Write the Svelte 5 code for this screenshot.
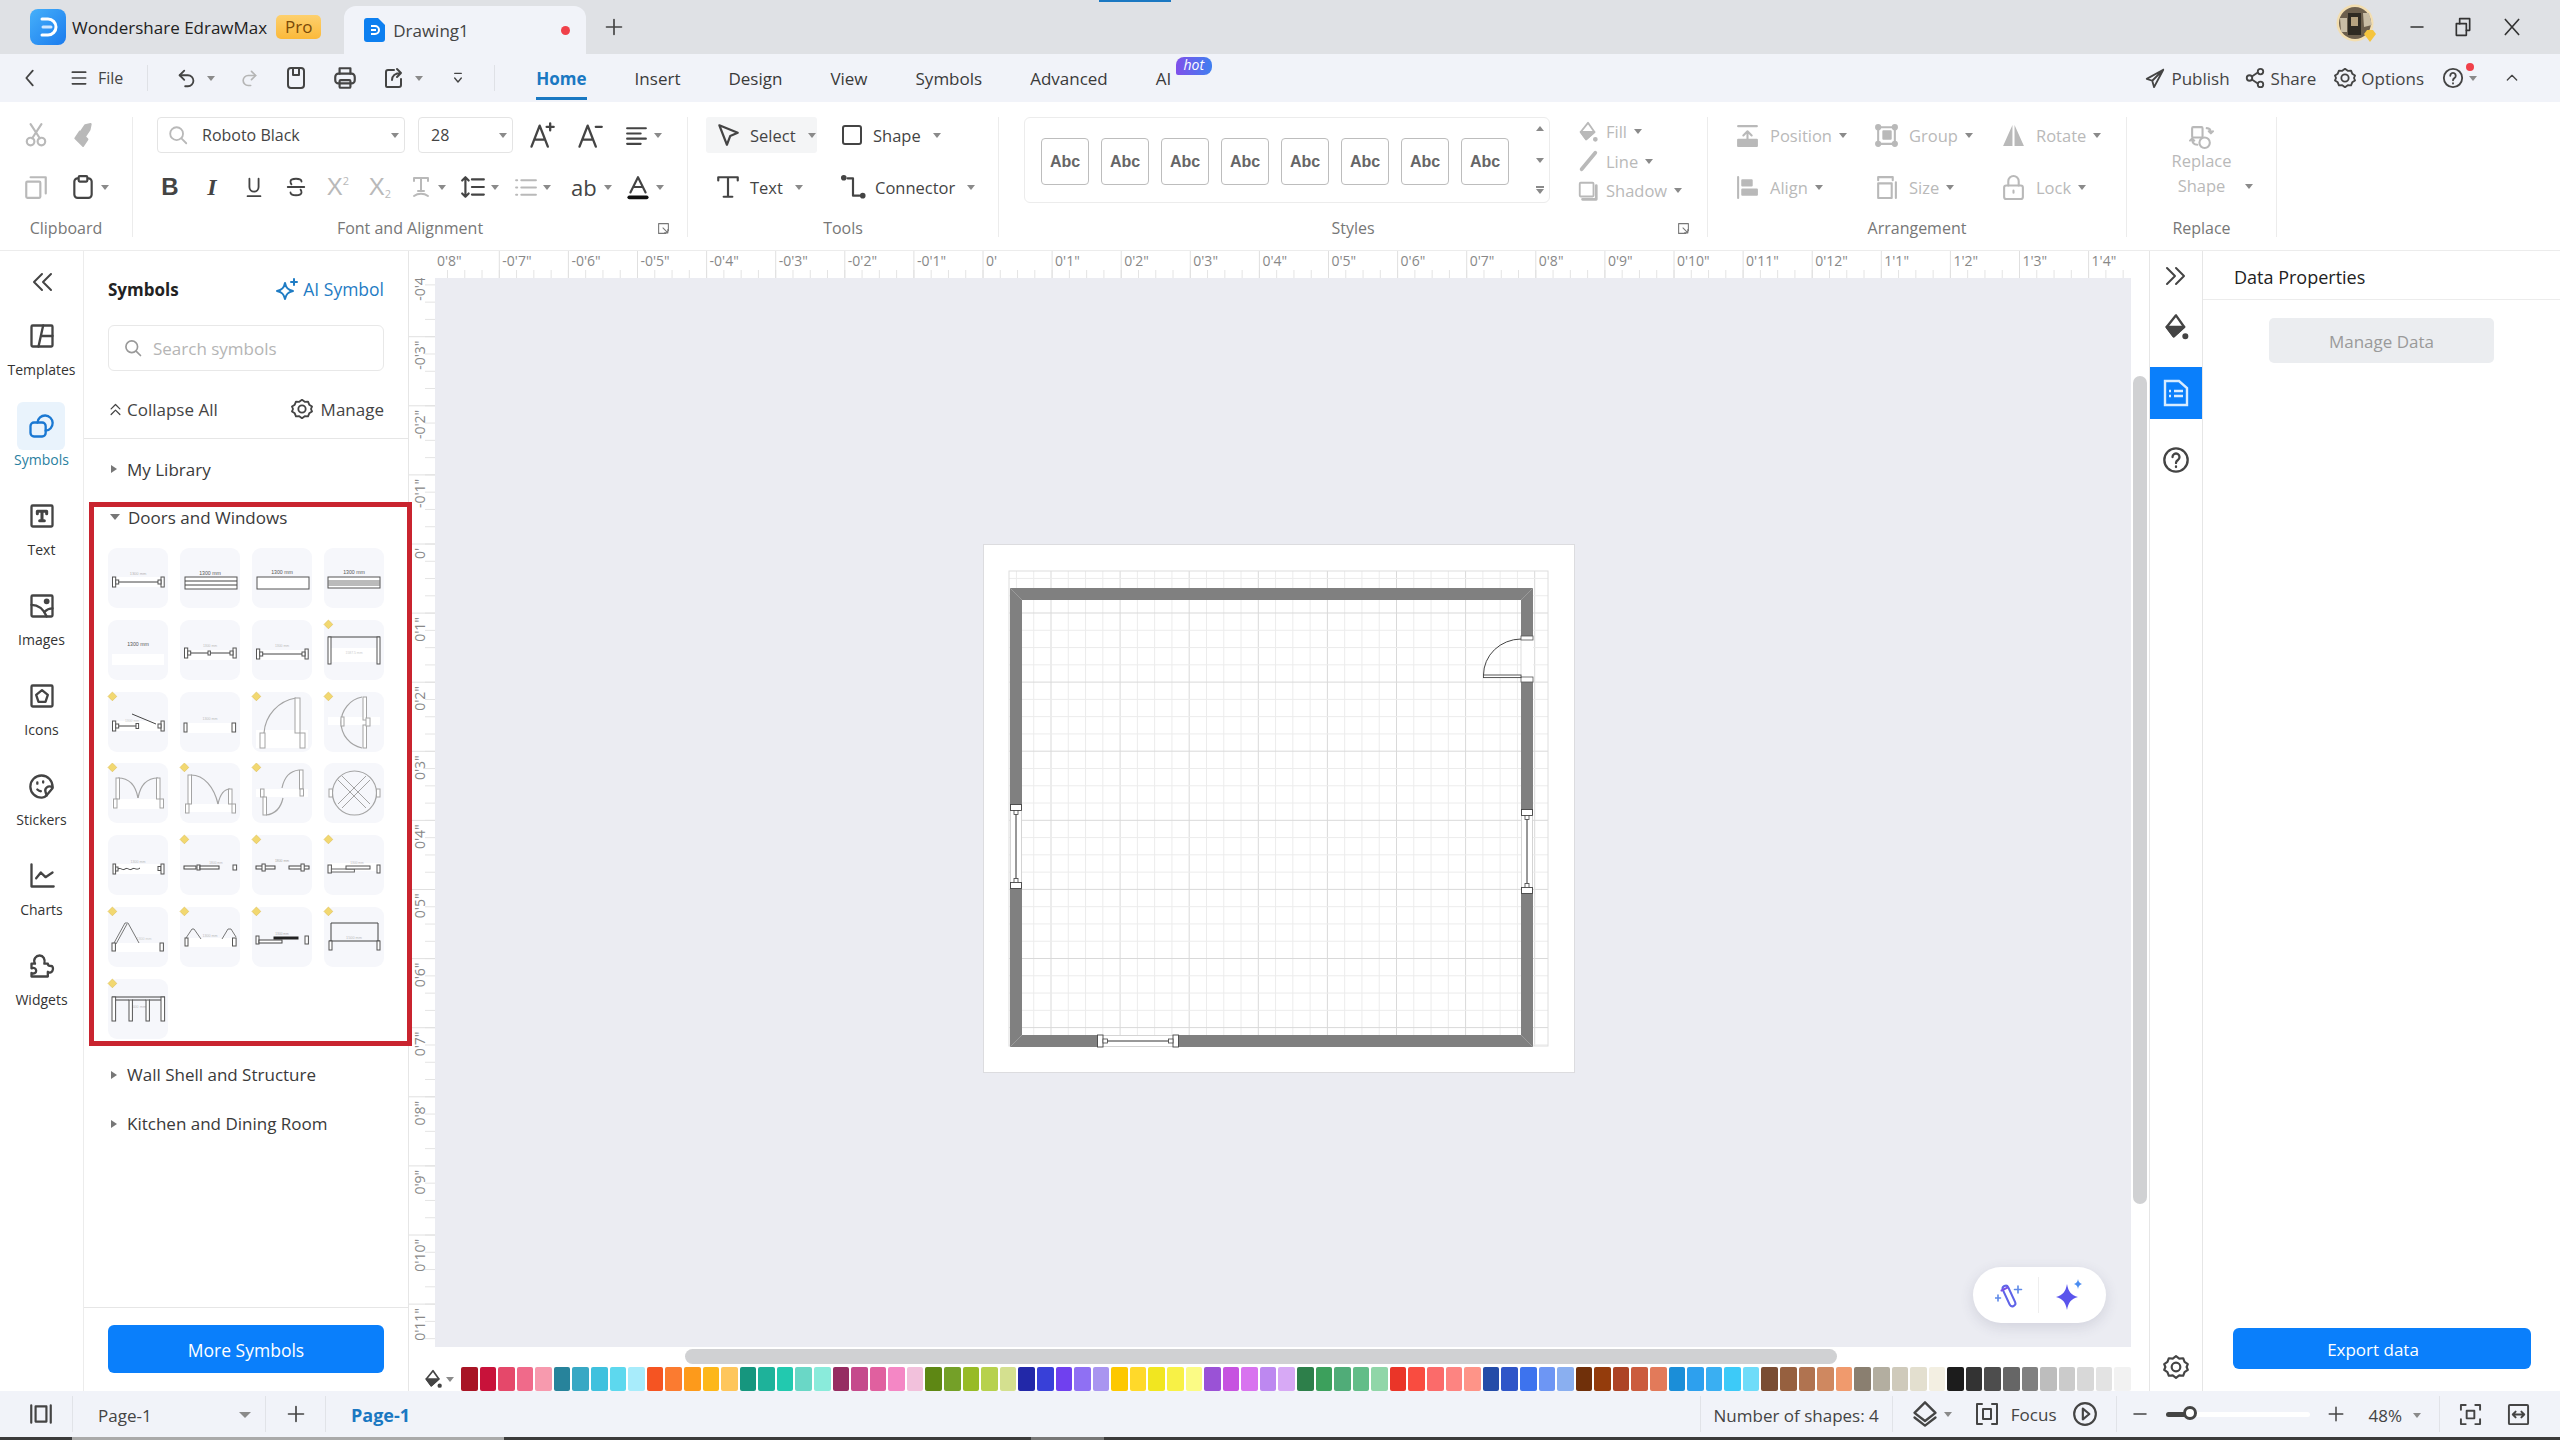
<script>
    const icons = {
        back: '<path d="M15 4 8 12l7 8"/>',
        menu: '<path d="M4 5h16M4 12h16M4 19h16"/>',
        undo: '<path d="M9 4 4 9l5 5"/><path d="M4 9h9a6 6 0 0 1 0 12h-3"/>',
        redo: '<path d="m15 4 5 5-5 5"/><path d="M20 9h-9a6 6 0 0 0 0 12h3"/>',
        save: '<rect x="4" y="2" width="16" height="20" rx="3"/><path d="M9 2v7h6V2"/>',
        print: '<path d="M7 8V3h10v5"/><rect x="3" y="8" width="18" height="9" rx="3"/><rect x="7" y="14" width="10" height="7" rx="1"/>',
        exportf: '<path d="M12 4H6a2 2 0 0 0-2 2v14a1 1 0 0 0 1 1h12a2 2 0 0 0 2-2v-6"/><path d="M10 14c0-4 3-7 9-7M15 3l4 4-4 4"/>',
        custom: '<path d="M7 5h10M7 12l5 6 5-6"/>',
        publish: '<path d="M21 3 3 13l6 2 2 7 10-19ZM9 15 21 3"/>',
        share: '<circle cx="18" cy="5" r="3"/><circle cx="6" cy="12" r="3"/><circle cx="18" cy="19" r="3"/><path d="m9 10 6-4M9 14l6 4"/>',
        gear: '<path d="m12 2 3 2.2 3.6-.3 1.3 3.4 3 2.1L21.8 12l1.1 2.6-3 2.1-1.3 3.4-3.6-.3L12 22l-3-2.2-3.6.3-1.3-3.4-3-2.1L2.2 12 1.1 9.4l3-2.1 1.3-3.4 3.6.3L12 2Z"/><circle cx="12" cy="12" r="4"/>',
        help: '<circle cx="12" cy="12" r="10"/><path d="M9 9.5a3 3 0 1 1 4.5 2.6c-1 .6-1.5 1.2-1.5 2.4"/><path d="M12 17.5v.5"/>',
        up: '<path d="m5 15 7-7 7 7"/>',
        cut: '<circle cx="7" cy="18" r="3.5"/><circle cx="17" cy="18" r="3.5"/><path d="M8.5 15 17 2M15.5 15 7 2"/>',
        painter: '<path d="m9 9 7 7-4 6-7-7z" fill="currentColor"/><path d="M14 3l5-1-1 5-4 6-4-4z" fill="currentColor"/>',
        copy: '<rect x="3" y="7" width="13" height="15" rx="1"/><path d="M7 3h14v15"/>',
        paste: '<rect x="4" y="4" width="16" height="18" rx="3"/><rect x="8" y="2" width="8" height="5" rx="1" fill="#fff"/>',
        search: '<circle cx="10.5" cy="10.5" r="7"/><path d="m16 16 5 5"/>',
        aplus: '<path d="M3 22 10 4l7 18M5.5 16h9"/><path d="M19 2v6M16 5h6"/>',
        aminus: '<path d="M3 22 10 4l7 18M5.5 16h9"/><path d="M17 5h5"/>',
        align: '<path d="M3 5h18M3 10h13M3 15h18M3 20h13"/>',
        strike: '<path d="M18 6c0-4-12-4-12 0 0 1 0 2 1 3M6 18c0 4 12 4 12 0 0-1 0-2-1-3M3 12h18"/>',
        under: '<path d="M7 3v9a5 5 0 0 0 10 0V3M5 22h14"/>',
        tfx: '<path d="M5 3h14M12 3v13M9 16h6M5 21c4-3 10-3 14 0M5 3v3M19 3v3"/>',
        spacing: '<path d="M5 3v18M2 6l3-3 3 3M2 18l3 3 3-3M11 5h11M11 12h11M11 19h11"/>',
        list: '<path d="M8 5h14M8 12h14M8 19h14M3 5h1M3 12h1M3 19h1"/>',
        color: '<path d="M5 17 12 3l7 14M7.5 12h9"/><path d="M4 21.5h16" stroke="#111" stroke-width="3.5"/>',
        pointer: '<path d="M4 3 21 10l-7 3-3 8z"/>',
        shape: '<rect x="3" y="3" width="18" height="18" rx="2"/>',
        ttool: '<path d="M3 6V3h18v3M12 3v18M8 21h8"/>',
        connector: '<circle cx="3.5" cy="3.5" r="1.6" fill="currentColor"/><path d="M7 4h5v16h6"/><circle cx="21" cy="20" r="1.6" fill="currentColor"/>',
        fill: '<path d="M12 2 4 12l6 8 9-8z"/><path d="M4 12h15l-9 8z" fill="currentColor"/><circle cx="20" cy="20" r="1.6" fill="currentColor"/>',
        line: '<path d="M5 21 20 3" stroke-width="4"/>',
        shadow: '<rect x="3" y="3" width="15" height="15" rx="1" fill="#fff"/><path d="M6 21h15V6" stroke-width="3"/>',
        position: '<path d="M3 3h18M12 18V8M8 12l4-4 4 4"/><rect x="3" y="16" width="18" height="6" fill="currentColor"/>',
        group: '<rect x="4" y="4" width="16" height="16" rx="2"/><circle cx="4" cy="4" r="2" fill="currentColor"/><circle cx="20" cy="4" r="2" fill="currentColor"/><circle cx="4" cy="20" r="2" fill="currentColor"/><circle cx="20" cy="20" r="2" fill="currentColor"/><rect x="9" y="8" width="7" height="7" fill="currentColor"/>',
        rotate: '<path d="M11 2 2 22h9zM13 2l9 20h-9z" fill="currentColor" stroke="none"/>',
        alignl: '<path d="M3 2v20"/><rect x="7" y="5" width="9" height="5" fill="currentColor"/><rect x="7" y="14" width="14" height="5" fill="currentColor"/>',
        size: '<path d="M4 2h14M4 5V2M18 5V2M21 7v15"/><rect x="4" y="8" width="13" height="14"/>',
        lock: '<rect x="3" y="10" width="18" height="13" rx="2"/><path d="M7 10V6a5 5 0 0 1 10 0v4"/><path d="M12 15v2"/>',
        replace: '<rect x="3" y="2" width="10" height="10" rx="1"/><circle cx="15" cy="17" r="5"/><path d="M17 3c3 0 4 2 4 5M19 6l2 2 2-2M3 13c0 3 1 6 5 6M1 15l2-2 2 2"/>',
        expand: '<path d="M3 3h18v13M3 3v18h13"/><path d="m11 11 9 9M20 14v6h-6"/>',
        collapse2: '<path d="m5 11 7-7 7 7M5 20l7-7 7 7"/>',
        dleft: '<path d="M12 4 4 12l8 8M21 4l-8 8 8 8"/>',
        dright: '<path d="m12 4 8 8-8 8M3 4l8 8-8 8"/>',
        templates: '<rect x="3" y="3" width="18" height="18" rx="1"/><path d="M13 3 9 21M11.500 12H21"/>',
        symbols: '<rect x="3" y="9" width="13" height="12" rx="3"/><path d="M9 9a6.500 6.500 0 1 1 7 7"/>',
        text: '<rect x="3" y="3" width="18" height="18" rx="1"/><path d="M8 10V8h8v2M12 8v8M10 16h4" stroke-width="2.600"/>',
        images: '<rect x="3" y="3" width="18" height="18" rx="1"/><path d="M3 11c6 0 10 3 13 10"/><path d="M21 14c-3 0-5 1-7 3"/><circle cx="16" cy="8" r="1.500" fill="currentColor"/>',
        iconsi: '<rect x="3" y="3" width="18" height="18" rx="1"/><path d="m12 7 5 4-2 6H9l-2-6z"/>',
        stickers: '<path d="M21 13A9.500 9.500 0 1 0 12 22c2 0 3-1 4-2l5-6z"/><path d="M21 13c-4-2-7 1-6 4 .2 1 .6 2 1 3"/><path d="M8 9v1M13 8v1M8 15c1 1 2 1.500 3 1.500" />',
        charts: '<path d="M3 2v19h19"/><path d="m7 14 4-5 4 4 6-4"/>',
        widgets: '<path d="M3 10h3c-2-4 1-7 4-7s5 3 4 7h3c0 2 2 2 3 2s2 2 1 4-3 2-4 1v4H3v-3c2 1 4 0 4-2s-2-3-4-2z"/>',
        layers: '<path d="m12 2 9 9-9 7-9-7z"/><path d="m3 15 9 7 9-7"/>',
        focus: '<path d="M7 2H2v20h5M17 2h5v20h-5"/><rect x="8" y="7" width="8" height="10"/>',
        play: '<circle cx="12" cy="12" r="10"/><path d="m10 7 6 5-6 5z"/>',
        fit: '<path d="M7 2H2v5M17 2h5v5M7 22H2v-5M17 22h5v-5"/><rect x="8" y="8" width="8" height="8"/>',
        width: '<rect x="2" y="2" width="20" height="20" rx="1"/><path d="M6 12h12M9 9l-3 3 3 3M15 9l3 3-3 3"/>',
        pagesv: '<path d="M3 4v16M21 4v16"/><rect x="7" y="5" width="10" height="14"/>',
        plus: '<path d="M12 3v18M3 12h18"/>',
        minus: '<path d="M4 12h16"/>',
        restore: '<rect x="4" y="8" width="12" height="14"/><path d="M8 8V2h12v14h-4"/>',
        close: '<path d="m4 3 16 18M20 3 4 21"/>',
        spark: '<path d="M10 6c1 5 3 7 8 8-5 1-7 3-8 8-1-5-3-7-8-8 5-1 7-3 8-8Z"/><path d="M19 2v6M16 5h6" stroke-width="2"/>'
    };

    const tabs = ['Home', 'Insert', 'Design', 'View', 'Symbols', 'Advanced', 'AI'];
    const abc = Array(8).fill('Abc');

    const railItems = [
        ['templates', 'Templates'], ['symbols', 'Symbols'], ['text', 'Text'], ['images', 'Images'],
        ['iconsi', 'Icons'], ['stickers', 'Stickers'], ['charts', 'Charts'], ['widgets', 'Widgets']
    ];

    const arrange = [
        ['position', 'Position'], ['group', 'Group'], ['rotate', 'Rotate'],
        ['alignl', 'Align'], ['size', 'Size'], ['lock', 'Lock']
    ];

    const palette = [
        '#a81525','#c8123a','#e5486a','#f06a8a','#f79aae', '#27839b','#38a8c4','#3fc1de','#5dd8ee','#a8ecfb',
        '#f55422','#fb7b30','#fd9a1b','#fdb71a','#fec65c', '#16967e','#1eb29a','#22c9af','#6ad7c6','#8aebdb',
        '#962d62','#c54a8c','#e0609f','#f487c5','#f2c1dc', '#5e8714','#74a028','#97bb26','#b7d14d','#d4e08f',
        '#2228a8','#3840d8','#7040ef','#8f70f3','#a995f0', '#fdc800','#ffd92a','#f1e620','#f8f146','#fbfb85',
        '#9a52d6','#c653e0','#d873ef','#bd88f0','#d7a9f5', '#2d7f4a','#3ca05c','#50ac78','#62bd88','#90d6a8',
        '#ea3528','#f94c40','#fb6b6a','#fd8481','#fe9488', '#244ca8','#2f55c8','#3d73ee','#6d96f4','#8aaff0',
        '#70300a','#943c0c','#ad4426','#cb5c3e','#e27a5a', '#1b8ed8','#2da0ee','#3aaff2','#3dcaf8','#6fdcf9',
        '#7a4d33','#96603f','#b07350','#cf8860','#f09a6d', '#8a7f70','#b3aea0','#cfcabb','#e3dfcf','#f3efe2',
        '#1c1c1c','#333333','#4d4d4d','#666666','#808080', '#bdbdbd','#cbcbcb','#d8d8d8','#e3e3e3','#f2f2f2'
    ];

    // ruler ticks, 69.1px to the inch, origin on the page corner
    const unit = 69.1;
    const hOrigin = 983 - 435;
    const vOrigin = 544 - 278;
    function rulerLabel(k) {
        if (k === 0) return "0'";
        if (k < 0) return `-0'${-k}"`;
        if (k > 12) return `1'${k - 12}"`;
        return `0'${k}"`;
    }
    const hTicks = [];
    for (let k = -7; k <= 16; k++) hTicks.push({ x: hOrigin + unit * k, label: rulerLabel(k) });
    const hMinor = [];
    for (let i = 0; i < 100; i++) hMinor.push(hOrigin + (i - 32) * unit / 4);
    const vTicks = [];
    for (let k = -4; k <= 11; k++) vTicks.push({ y: vOrigin + unit * k, label: rulerLabel(k) });
    const vMinor = [];
    for (let i = 0; i < 64; i++) vMinor.push(vOrigin + (i - 16) * unit / 4);

    // page grid
    const gridV = [], gridH = [];
    for (let i = -2; i < 30; i++) {
        const x = 68 + (i * unit) / 4;
        if (x > 26 && x < 565) gridV.push({ p: x, major: i % 4 === 0 });
        const y = 69 + (i * unit) / 4;
        if (y > 27 && y < 502) gridH.push({ p: y, major: i % 4 === 0 });
    }

    // symbol library thumbnails, drawn on a 60x60 tile
    const label = (t, y, c = '#b5b5b5', s = 4, x = 30) => `<text x="${x}" y="${y}" text-anchor="middle" font-size="${s}" fill="${c}">${t}</text>`;
    const band = (y, h = 10) => `<rect x="4" y="${y}" width="52" height="${h}" fill="#fff"/>`;
    const box = (x, y, w, h, c = '#555', f = '#fff') => `<rect x="${x}" y="${y}" width="${w}" height="${h}" fill="${f}" stroke="${c}" stroke-width="1"/>`;
    const ln = (d, c = '#444', w = 1) => `<path d="${d}" fill="none" stroke="${c}" stroke-width="${w}"/>`;
    const g = '#a4a4a4';
    const dark = '#555';
    const caps = (y, extra = true) => box(4.5, y - 5, 3.2, 10) + box(53, y - 5, 3.2, 10) + (extra ? box(7.7, y - 2, 3, 4) + box(50, y - 2, 3, 4) : '');

    const thumbs = [
        { d: 0, s: band(29) + label('1300 mm', 27) + caps(34) + ln('M10.700 34H50') },
        { d: 0, s: label('1300 mm', 27, dark, 5.2) + box(5, 29, 52, 12) + ln('M5 33h52M5 37h52') },
        { d: 0, s: label('1300 mm', 26, dark, 5.2) + box(5, 29, 52, 12) },
        { d: 0, s: label('1300 mm', 26, dark, 5.2) + box(4, 29, 52, 11) + ln('M4 33h52M4 35h52M4 37h52', '#777') },
        { d: 0, s: label('1300 mm', 26, dark, 5.2) + band(34, 11) },
        { d: 0, s: band(30) + label('1300 mm', 27, '#bbb', 3.4) + caps(33) + ln('M10.700 33H50') + box(28, 31, 2.4, 4) },
        { d: 0, s: band(30) + label('1300 mm', 27, '#bbb', 3.4) + caps(34) + ln('M10.700 34H50') },
        { d: 1, s: band(28, 14) + label('1587.5 mm', 34, '#ccc', 3.4) + ln('M4 17h52') + box(4, 17, 3, 27) + box(53, 17, 3, 27) },
        { d: 1, s: band(29) + label('1300 mm', 30, '#ccc', 3.4, 24) + caps(34) + ln('M10.700 34H28') + box(28, 31.5, 2.6, 5) + ln('M24 22 48 32') },
        { d: 0, s: band(31, 10) + label('1300 mm', 28, '#bbb', 3.6) + box(4, 31, 3, 9) + box(52, 31, 3.6, 9) },
        { d: 1, s: band(38, 18) + ln('M44 6A38 38 0 0 0 12 41', g, 1.2) + box(43, 6, 5, 35, g) + box(8, 41, 5, 15, g) + box(48, 41, 5, 15, g) },
        { d: 1, s: band(25, 8) + ln('M38 5a26 26 0 0 0 0 51', g, 1.2) + box(39, 5, 3.5, 23, g) + box(39, 33, 3.5, 23, g) + box(17, 25, 3, 9, g) + box(42, 26, 4, 8, g) },
        { d: 1, s: band(36, 10) + ln('M10 15C22 15 28 24 30 35', g, 1.2) + ln('M50 15C38 15 32 24 30 35', g, 1.2) + box(8, 15, 3.5, 21, g) + box(48.5, 15, 3.5, 21, g) + box(5.5, 36, 3.5, 9, g) + box(52, 36, 3.5, 9, g) },
        { d: 1, s: band(41, 8) + ln('M11 12C24 12 34 24 38 41', g, 1.2) + ln('M50 26C44 26 40 32 38 41', g, 1.2) + box(8, 12, 3.5, 29, g) + box(48.5, 26, 3.5, 15, g) + box(5.5, 41, 3.5, 9, g) + box(52, 41, 3.5, 9, g) },
        { d: 1, s: band(26, 8) + ln('M47 7C38 8 32 15 30 25', g, 1.2) + ln('M14 52C24 51 29 44 31 35', g, 1.2) + box(47.5, 7, 3.5, 19, g) + box(48, 26, 3.5, 7, g) + box(8.5, 26, 3.5, 8, g) + box(11, 34, 3.5, 18, g) },
        { d: 0, s: `<circle cx="30.500" cy="30" r="22" fill="none" stroke="${g}" stroke-width="1.200"/>` + ln('M14 17 42 45M18 13 46 41M46 17 18 45M42 13 14 41', g) + box(5, 26, 3.5, 8, g) + box(52.5, 26, 3.5, 8, g) },
        { d: 0, s: band(29, 10) + label('1300 mm', 28, '#bbb', 3.6) + box(5, 29, 2.6, 10) + box(7.6, 32, 2.4, 4) + ln('M10 34c3-2 4 2 7 0s4 2 7 0 4 2 8-1') + box(50, 31.5, 3, 4) + box(53, 29, 3, 10) },
        { d: 1, s: label('1800 mm', 29, '#bbb', 3.2, 36) + box(4, 31, 12, 3, '#444') + box(17, 30, 3, 5) + box(20, 31, 19, 3, '#444') + box(53, 30, 3.6, 5) },
        { d: 1, s: label('1800 mm', 27, '#aaa', 3.4) + box(4, 31, 19, 3, '#444') + box(10, 29, 3.2, 7) + box(37, 31, 20, 3, '#444') + box(49, 29, 3.2, 7) },
        { d: 1, s: band(28, 8) + label('1300 mm', 29, '#bbb', 3.2, 33) + box(4, 30, 3.4, 8) + box(7.4, 34, 23, 3, '#666') + box(22, 31, 24, 3) + box(53, 30, 3, 8) },
        { d: 1, s: band(36, 9) + label('1300 mm', 33, '#ccc', 3.6, 36) + ln('M6 36 17 16l3 0 11 20M8 37l11-20', '#777') + box(4, 36, 3.4, 8) + box(52, 36, 3.4, 8) },
        { d: 1, s: band(31, 9) + label('1300 mm', 30, '#bbb', 3.6) + ln('M6 31 12 22l2 0 7 10M42 32l6-10h3l5 8', '#777') + box(5, 31, 3, 8) + box(52.5, 31, 3.6, 8) },
        { d: 1, s: label('1300 mm', 28, '#aaa', 3.2) + box(4, 29, 3, 8) + box(7, 33, 23, 3, '#444') + box(22, 30, 24, 2, '#222', '#222') + box(53, 29, 3.4, 8) },
        { d: 1, s: label('1500 mm', 32, '#bbb', 3.8) + ln('M7 16h47v18M7 16v18M5 34h51') + box(5, 34, 3, 9) + box(53, 34, 3, 9) },
        { d: 1, s: label('1500 mm', 29, '#bbb', 4) + ln('M4 18h53') + ln('M5 21H21M24 21H38M41 21h16') + box(4, 18, 3.6, 24) + box(21, 21, 3.4, 21) + box(38, 21, 3.4, 21) + box(53, 18, 3.6, 24) }
    ];
</script>

{#snippet ic(name, size = 24)}
    <svg class="ic" width={size} height={size} viewBox="0 0 24 24" fill="none" stroke="currentColor" stroke-width="2" stroke-linecap="round" stroke-linejoin="round">{@html icons[name]}</svg>
{/snippet}

<div class="app">
    <header class="titlebar">
        <i class="progress"></i>
        <svg class="logo" width="36" height="36" viewBox="0 0 36 36">
            <defs><linearGradient id="lg" x1="0" y1="0" x2="1" y2="1"><stop offset="0" stop-color="#46b0fa"/><stop offset="1" stop-color="#1a7bee"/></linearGradient></defs>
            <rect width="36" height="36" rx="8" fill="url(#lg)"/>
            <path d="M12 10h6a8 8 0 0 1 0 16h-6" fill="none" stroke="#fff" stroke-width="3" stroke-linecap="round"/>
            <path d="M13 18h8" stroke="#cfe6ff" stroke-width="3" stroke-linecap="round"/>
        </svg>
        <span class="brand">Wondershare EdrawMax</span>
        <span class="pro">Pro</span>
        <div class="doc-tab">
            <svg width="21" height="24" viewBox="0 0 21 24"><path d="M3 0h11l7 7v14a3 3 0 0 1-3 3H3a3 3 0 0 1-3-3V3a3 3 0 0 1 3-3Z" fill="#0d7ff0"/><path d="M7 8h4a4 4 0 0 1 0 8H7" fill="none" stroke="#fff" stroke-width="2"/><path d="M7 12h5" stroke="#fff" stroke-width="2"/></svg>
            <span>Drawing1</span>
            <i class="unsaved"></i>
        </div>
        <span class="newtab">{@render ic('plus', 20)}</span>
        <div class="winctl">
            <div class="avatar">
                <svg width="42" height="42" viewBox="0 0 42 42">
                    <circle cx="19" cy="19" r="18.500" fill="#f3deb0"/>
                    <circle cx="19" cy="19" r="16" fill="#6c5f4d"/>
                    <rect x="12" y="9" width="13" height="22" fill="#2e2a22"/>
                    <rect x="15" y="13" width="7" height="9" fill="#b5a27f"/>
                    <path d="M4 14h7v14H5zM27 9h6l3 12-8 2z" fill="#c9bda5"/>
                    <path d="M31 26l6 0 3 4-6 8-6-8z" fill="#f5c43d"/>
                </svg>
            </div>
            <span class="win-min">{@render ic('minus', 18)}</span>
            <span class="win-res">{@render ic('restore', 20)}</span>
            <span class="win-x">{@render ic('close', 20)}</span>
        </div>
    </header>

    <nav class="menubar">
        <span class="m-back">{@render ic('back', 22)}</span>
        <span class="m-file">{@render ic('menu', 20)}<span>File</span></span>
        <i class="m-sep"></i>
        <span class="m-undo">{@render ic('undo', 22)}<i class="caret"></i></span>
        <span class="m-redo">{@render ic('redo', 20)}</span>
        <span class="m-save">{@render ic('save', 24)}</span>
        <span class="m-print">{@render ic('print', 26)}</span>
        <span class="m-exp">{@render ic('exportf', 24)}<i class="caret"></i></span>
        <span class="m-cust">{@render ic('custom', 16)}</span>
        <i class="m-sep m-sep2"></i>
        <div class="tabs">
            {#each tabs as t, i}
                <span class="tab" class:active={i === 0}>
                    {t}
                    {#if t === 'AI'}<em class="hot">hot</em>{/if}
                </span>
            {/each}
        </div>
        <div class="m-right">
            <span class="mr mr-pub">{@render ic('publish', 22)}Publish</span>
            <span class="mr mr-share">{@render ic('share', 22)}Share</span>
            <span class="mr mr-opt">{@render ic('gear', 22)}Options</span>
            <span class="mr-help">{@render ic('help', 22)}<i class="dot"></i><i class="caret"></i></span>
            <span class="mr-up">{@render ic('up', 16)}</span>
        </div>
    </nav>

    <section class="ribbon">
        <div class="rgroup g-clip">
            <div class="rrow off"><span class="cell">{@render ic('cut', 26)}</span><span class="cell">{@render ic('painter', 26)}</span></div>
            <div class="rrow"><span class="cell off">{@render ic('copy', 26)}</span><span class="cell">{@render ic('paste', 26)}</span><i class="caret c5"></i></div>
            <div class="rlabel"><span></span><span>Clipboard</span><span></span></div>
        </div>

        <div class="rgroup g-font">
            <div class="rrow">
                <div class="fbox fname"><span class="off">{@render ic('search', 22)}</span><span>Roboto Black</span><i class="caret push"></i></div>
                <div class="fbox fsize"><span>28</span><i class="caret push"></i></div>
                <span class="cell a1">{@render ic('aplus', 28)}</span>
                <span class="cell a2">{@render ic('aminus', 28)}</span>
                <span class="cell a3">{@render ic('align', 25)}</span><i class="caret c5"></i>
            </div>
            <div class="rrow r2">
                <span class="fb"><b>B</b></span>
                <span class="fb"><b class="it">I</b></span>
                <span class="fb">{@render ic('under', 22)}</span>
                <span class="fb">{@render ic('strike', 22)}</span>
                <span class="fb off sup">X<small>2</small></span>
                <span class="fb off sub">X<small>2</small></span>
                <span class="dd d1 off">{@render ic('tfx', 24)}<i class="caret"></i></span>
                <span class="dd">{@render ic('spacing', 26)}<i class="caret"></i></span>
                <span class="dd off">{@render ic('list', 25)}<i class="caret"></i></span>
                <span class="dd ab"><span>ab</span><i class="caret"></i></span>
                <span class="dd dA">{@render ic('color', 26)}<i class="caret"></i></span>
            </div>
            <div class="rlabel"><span></span><span>Font and Alignment</span><span class="exp">{@render ic('expand', 13)}</span></div>
        </div>

        <div class="rgroup g-tools">
            <div class="rrow">
                <span class="tbtn hover">{@render ic('pointer', 26)}<span>Select</span><i class="caret push"></i></span>
                <span class="tbtn second">{@render ic('shape', 24)}<span>Shape</span><i class="caret"></i></span>
            </div>
            <div class="rrow">
                <span class="tbtn">{@render ic('ttool', 26)}<span>Text</span><i class="caret"></i></span>
                <span class="tbtn second">{@render ic('connector', 26)}<span>Connector</span><i class="caret"></i></span>
            </div>
            <div class="rlabel"><span></span><span>Tools</span><span></span></div>
        </div>

        <div class="rgroup g-styles">
            <div class="styles-body">
                <div class="gallery">
                    {#each abc as a}<span class="abc">{a}</span>{/each}
                    <div class="spin">
                        <i class="tri tri-up"></i>
                        <i class="tri"></i>
                        <i class="tri tri-more"></i>
                    </div>
                </div>
                <div class="fillstack off">
                    <span>{@render ic('fill', 22)}<em>Fill</em><i class="caret"></i></span>
                    <span>{@render ic('line', 22)}<em>Line</em><i class="caret"></i></span>
                    <span>{@render ic('shadow', 22)}<em>Shadow</em><i class="caret"></i></span>
                </div>
            </div>
            <div class="rlabel"><span></span><span>Styles</span><span class="exp">{@render ic('expand', 13)}</span></div>
        </div>

        <div class="rgroup g-arr">
            <div class="arr-grid off">
                {#each arrange as [icon, name]}
                    <span class="arr">{@render ic(icon, 25)}<em>{name}</em><i class="caret"></i></span>
                {/each}
            </div>
            <div class="rlabel"><span></span><span>Arrangement</span><span></span></div>
        </div>

        <div class="rgroup g-rep">
            <div class="rep off">
                {@render ic('replace', 25)}
                <span class="rep-t">Replace</span>
                <span class="rep-b"><span></span><span>Shape</span><i class="caret"></i></span>
            </div>
            <div class="rlabel"><span></span><span>Replace</span><span></span></div>
        </div>
    </section>

    <main class="body">
        <aside class="rail">
            <div class="rail-top">{@render ic('dleft', 24)}</div>
            {#each railItems as [icon, name]}
                <div class="rail-item" class:on={name === 'Symbols'}>
                    <span class="rail-box">{@render ic(icon, 28)}</span>
                    <span class="rail-lbl">{name}</span>
                </div>
            {/each}
        </aside>

        <aside class="panel">
            <div class="p-head">
                <strong>Symbols</strong>
                <span class="ai-sym">{@render ic('spark', 24)}AI Symbol</span>
            </div>
            <div class="p-search">{@render ic('search', 20)}<span>Search symbols</span></div>
            <div class="p-actions">
                <span class="pa">{@render ic('collapse2', 15)}Collapse All</span>
                <span class="pa pa-m">{@render ic('gear', 22)}Manage</span>
            </div>
            <div class="cat c-my"><i class="arrow"></i>My Library</div>
            <div class="cat c-doors"><i class="arrow open"></i>Doors and Windows</div>
            <div class="thumbs">
                {#each thumbs as t}
                    <div class="thumb">
                        <svg width="60" height="60" viewBox="0 0 60 60" font-family="Liberation Sans, sans-serif">
                            {@html t.s}
                            {#if t.d}<path d="M4.400 0l4.400 4.400-4.400 4.400L0 4.400z" fill="#f2d870" stroke="#dcbc52" stroke-width=".6"/>{/if}
                        </svg>
                    </div>
                {/each}
            </div>
            <div class="cat c-wall"><i class="arrow"></i>Wall Shell and Structure</div>
            <div class="cat c-kit"><i class="arrow"></i>Kitchen and Dining Room</div>
            <div class="p-foot"><button class="primary more-btn">More Symbols</button></div>
            <i class="redbox"></i>
        </aside>

        <div class="center">
            <div class="hruler">
                <span class="corner"></span>
                <svg width="1696" height="27" class="rsvg">
                    {#each hMinor as x}<line x1={x} x2={x} y1="19" y2="27" stroke="#e4e4e4"/>{/each}
                    {#each hTicks as t}
                        <line x1={t.x} x2={t.x} y1="0" y2="27" stroke="#e0e0e0"/>
                        <text x={t.x + 3} y="15" class="rtext">{t.label}</text>
                    {/each}
                    <text x="2" y="15" class="rtext">0'8"</text>
                </svg>
            </div>
            <div class="work">
                <svg class="vruler" width="26" height="1069">
                    {#each vMinor as y}<line x1="16" x2="26" y1={y} y2={y} stroke="#e4e4e4"/>{/each}
                    {#each vTicks as t}
                        <line x1="0" x2="26" y1={t.y} y2={t.y} stroke="#e0e0e0"/>
                        <text transform="translate(16 {t.y + 4}) rotate(-90)" text-anchor="end" class="rtext">{t.label}</text>
                    {/each}
                </svg>
                <div class="canvas">
                    <svg class="page" width="592" height="529" viewBox="0 0 592 529">
                        <rect x=".5" y=".5" width="591" height="528" fill="#fff" stroke="#dcdcdf"/>
                        {#each gridV as l}<line x1={l.p} x2={l.p} y1="27" y2="502" stroke={l.major ? '#d9d9d9' : '#ececec'}/>{/each}
                        {#each gridH as l}<line x1="26" x2="565" y1={l.p} y2={l.p} stroke={l.major ? '#d9d9d9' : '#ececec'}/>{/each}
                        <rect x="26" y="27" width="539" height="475" fill="none" stroke="#dedede"/>

                        <path d="M27 44H550V503H27ZM39 56V491H538V56Z" fill="#808080" fill-rule="evenodd"/>
                        <path d="M27 44l12 12M550 44l-12 12M27 503l12-12M550 503l-12-12" stroke="#9a9a9a"/>

                        <!-- door, right wall -->
                        <rect x="538" y="96" width="12" height="38" fill="#fff"/>
                        <path d="M538 96V134" stroke="#ddd"/>
                        <rect x="538" y="92" width="12" height="4" fill="#fff" stroke="#555" stroke-width=".8"/>
                        <rect x="538" y="133" width="12" height="5" fill="#fff" stroke="#555" stroke-width=".8"/>
                        <rect x="500.500" y="131" width="37.500" height="2.600" fill="#fff" stroke="#444" stroke-width=".9"/>
                        <path d="M500.500 131A38 36 0 0 1 538 95" fill="none" stroke="#444"/>

                        <!-- windows -->
                        <rect x="27" y="266" width="12" height="73" fill="#fff"/>
                        <path d="M27.500 267V338M38.500 267V338" stroke="#d4d4d4"/>
                        <rect x="27.500" y="260.500" width="11" height="6" fill="#fff" stroke="#444" stroke-width=".9"/>
                        <rect x="31" y="266.500" width="4" height="4" fill="#fff" stroke="#444" stroke-width=".8"/>
                        <rect x="27.500" y="338.500" width="11" height="6" fill="#fff" stroke="#444" stroke-width=".9"/>
                        <rect x="31" y="334.500" width="4" height="4" fill="#fff" stroke="#444" stroke-width=".8"/>
                        <path d="M33 270.500V334.500" stroke="#333"/>

                        <rect x="538" y="271" width="12" height="73" fill="#fff"/>
                        <path d="M538.500 272V343M549.500 272V343" stroke="#d4d4d4"/>
                        <rect x="538.500" y="265.500" width="11" height="6" fill="#fff" stroke="#444" stroke-width=".9"/>
                        <rect x="542" y="271.500" width="4" height="4" fill="#fff" stroke="#444" stroke-width=".8"/>
                        <rect x="538.500" y="343.500" width="11" height="6" fill="#fff" stroke="#444" stroke-width=".9"/>
                        <rect x="542" y="339.500" width="4" height="4" fill="#fff" stroke="#444" stroke-width=".8"/>
                        <path d="M544 275.500V339.500" stroke="#333"/>

                        <rect x="119" y="491" width="72" height="12" fill="#fff"/>
                        <path d="M120 491.500H190M120 502.500H190" stroke="#d4d4d4"/>
                        <rect x="114.500" y="491" width="5.500" height="12" fill="#fff" stroke="#444" stroke-width=".9"/>
                        <rect x="120" y="495" width="4.500" height="4" fill="#fff" stroke="#444" stroke-width=".8"/>
                        <rect x="190" y="491" width="5.500" height="12" fill="#fff" stroke="#444" stroke-width=".9"/>
                        <rect x="185.500" y="495" width="4.500" height="4" fill="#fff" stroke="#444" stroke-width=".8"/>
                        <path d="M124.500 497H185.500" stroke="#333"/>
                    </svg>
                    <div class="pill">
                        <svg width="28" height="32" viewBox="0 0 28 32" fill="none" stroke-linecap="round">
                            <rect x="11" y="6" width="6" height="22" rx="3" transform="rotate(-25 14 17)" stroke="#5f63e8" stroke-width="2"/>
                            <path d="M6.500 11.500l6-2.800" stroke="#7a50e4" stroke-width="2"/>
                            <path d="M23 7v7M19.500 10.500h7M3 16v6M0.500 19h5" stroke="#5f8ae8" stroke-width="1.600"/>
                        </svg>
                        <i class="pill-sep"></i>
                        <svg width="30" height="32" viewBox="0 0 30 32"><path d="M13 5c1.500 8 4 11 11 13-7 2-9.500 5-11 13-1.500-8-4-11-11-13 7-2 9.500-5 11-13Z" fill="#5a54ec"/><path d="M24 0c.5 3 1.500 4 4 5-2.500 1-3.500 2-4 5-.5-3-1.500-4-4-5 2.500-1 3.500-2 4-5Z" fill="#4a8cf0"/></svg>
                    </div>
                </div>
                <div class="vscroll"><i class="vthumb"></i></div>
            </div>
            <div class="hscroll"><i class="hthumb"></i></div>
            <div class="colors">
                <span class="c-fill">{@render ic('fill', 20)}<i class="caret"></i></span>
                <div class="swatches">
                    {#each palette as c}<i class="sw" style="background:{c}"></i>{/each}
                </div>
            </div>
        </div>

        <aside class="rrail">
            <div class="rr-i rr-chev">{@render ic('dright', 24)}</div>
            <div class="rr-i">{@render ic('fill', 28)}</div>
            <div class="rr-i rr-on">
                <svg width="26" height="28" viewBox="0 0 26 28" fill="none" stroke="#d8ecff" stroke-width="2.400"><path d="M2 2h14l8 7v17H2z"/><path d="M6 12h2M11 12h9M6 17h2M11 17h9M6 22h0" stroke="#d8ecff"/></svg>
            </div>
            <div class="rr-i">{@render ic('help', 28)}</div>
            <div class="rr-i rr-gear">{@render ic('gear', 26)}</div>
        </aside>

        <aside class="props">
            <div class="props-t">Data Properties</div>
            <button class="manage">Manage Data</button>
            <button class="primary export">Export data</button>
        </aside>
    </main>

    <footer class="status">
        <span class="st st-view">{@render ic('pagesv', 26)}</span>
        <span class="st st-page"><span>Page-1</span><i class="caret big"></i></span>
        <span class="st st-add">{@render ic('plus', 20)}</span>
        <span class="st-cur">Page-1</span>
        <div class="st-right">
            <span class="st st-num">Number of shapes: 4</span>
            <span class="st st-lay">{@render ic('layers', 28)}<i class="caret"></i></span>
            <span class="st-focus">{@render ic('focus', 24)}<span>Focus</span></span>
            <span class="st st-play">{@render ic('play', 26)}</span>
            <span class="st-zm">{@render ic('minus', 18)}</span>
            <span class="slider"><i class="knob"></i></span>
            <span class="st-zp">{@render ic('plus', 18)}</span>
            <span class="st st-pct"><span>48%</span><i class="caret"></i></span>
            <span class="st-fit">{@render ic('fit', 23)}</span>
            <span class="st-w">{@render ic('width', 23)}</span>
        </div>
    </footer>
    <div class="taskline"></div>
</div>

<style>
    :global(body) {
        margin: 0;
        background: #fff;
    }

    .app {
        width: 2560px;
        height: 1440px;
        display: flex;
        flex-direction: column;
        overflow: hidden;
        font-family: "Open Sans", "Noto Sans", sans-serif;
        font-size: 16px;
        color: #333;
    }

    .ic {
        display: block;
        flex: none;
    }

    i, em {
        font-style: normal;
    }

    .off, .rrow.off {
        color: #b9b9b9;
    }

    .caret {
        display: inline-block;
        flex: none;
        width: 0;
        height: 0;
        border-left: 4px solid transparent;
        border-right: 4px solid transparent;
        border-top: 5px solid #8a8a8a;
    }

    .caret.big {
        border-left-width: 6px;
        border-right-width: 6px;
        border-top-width: 6px;
    }

    .push {
        margin-left: auto;
    }

    /* title bar */
    .titlebar {
        position: relative;
        height: 54px;
        flex: none;
        display: flex;
        align-items: center;
        background: #dfe1e5;
    }

    .progress {
        position: absolute;
        left: 1099px;
        top: 0;
        width: 72px;
        height: 2px;
        background: #1a78c2;
    }

    .logo {
        margin-left: 30px;
    }

    .brand {
        margin-left: 6px;
        font-size: 17px;
        color: #222;
        white-space: nowrap;
    }

    .pro {
        margin-left: 9px;
        width: 45px;
        height: 24px;
        line-height: 24px;
        border-radius: 5px;
        text-align: center;
        font-size: 17px;
        color: #7a4a08;
        background: linear-gradient(#fdd06e, #fbb93a);
    }

    .doc-tab {
        align-self: flex-end;
        margin-left: 23px;
        width: 242px;
        height: 48px;
        box-sizing: border-box;
        padding: 0 16px 0 20px;
        display: flex;
        align-items: center;
        gap: 8px;
        border-radius: 12px 12px 0 0;
        background: #f1f3f9;
        color: #444;
        font-size: 17px;
    }

    .unsaved {
        margin-left: auto;
        width: 9px;
        height: 9px;
        border-radius: 50%;
        background: #f0404a;
    }

    .newtab {
        margin-left: 18px;
        color: #444;
    }

    .winctl {
        margin-left: auto;
        display: flex;
        align-items: center;
        padding-right: 38px;
        color: #333;
    }

    .avatar {
        height: 42px;
        margin-top: -4px;
    }

    .win-min {
        margin-left: 30px;
    }

    .win-res {
        margin-left: 27px;
    }

    .win-x {
        margin-left: 29px;
    }

    /* menu row */
    .menubar {
        height: 48px;
        flex: none;
        display: flex;
        align-items: center;
        background: #f1f3f9;
        color: #444;
        font-size: 17px;
    }

    .m-back {
        margin-left: 19px;
    }

    .m-file {
        margin-left: 28px;
        display: flex;
        align-items: center;
        gap: 9px;
        font-size: 16px;
    }

    .m-sep {
        width: 1px;
        height: 26px;
        margin-left: 24px;
        background: #dfe1e6;
    }

    .m-undo {
        margin-left: 28px;
        display: flex;
        align-items: center;
        gap: 9px;
    }

    .m-redo {
        margin-left: 24px;
        color: #b5b5b5;
    }

    .m-save {
        margin-left: 25px;
    }

    .m-print {
        margin-left: 24px;
    }

    .m-exp {
        margin-left: 24px;
        display: flex;
        align-items: center;
        gap: 9px;
    }

    .m-cust {
        margin-left: 27px;
    }

    .m-sep2 {
        margin-left: 28px;
    }

    .tabs {
        margin-left: 41px;
        height: 100%;
        display: flex;
        gap: 48px;
    }

    .tab {
        position: relative;
        display: flex;
        align-items: center;
        color: #3a3a3a;
    }

    .tab.active {
        color: #1a78c2;
        font-weight: 700;
    }

    .tab.active::after {
        content: "";
        position: absolute;
        left: 0;
        right: 0;
        bottom: 2px;
        height: 3px;
        background: #1a78c2;
    }

    .hot {
        position: absolute;
        left: 20px;
        top: 3px;
        width: 36px;
        height: 18px;
        line-height: 16px;
        border-radius: 8px 8px 8px 2px;
        text-align: center;
        font-size: 14px;
        font-style: italic;
        color: #fff;
        background: linear-gradient(90deg, #8050ea, #3f7ff0);
    }

    .m-right {
        margin-left: auto;
        display: flex;
        align-items: center;
        padding-right: 40px;
    }

    .mr {
        display: flex;
        align-items: center;
        gap: 5px;
    }

    .mr-share {
        margin-left: 14px;
    }

    .mr-opt {
        margin-left: 18px;
    }

    .mr-help {
        position: relative;
        margin-left: 18px;
        display: flex;
        align-items: center;
        gap: 5px;
    }

    .dot {
        position: absolute;
        left: 24px;
        top: -4px;
        width: 8px;
        height: 8px;
        border-radius: 50%;
        background: #f0404a;
    }

    .mr-up {
        margin-left: 27px;
    }

    /* ribbon */
    .ribbon {
        height: 149px;
        flex: none;
        box-sizing: border-box;
        display: flex;
        align-items: flex-start;
        padding-top: 15px;
        background: #fff;
        border-bottom: 1px solid #ececec;
        font-size: 16.500px;
    }

    .rgroup {
        position: relative;
        flex: none;
        height: 120px;
        box-sizing: border-box;
        border-right: 1px solid #ececec;
    }

    .rrow {
        height: 36px;
        display: flex;
        align-items: center;
        color: #444;
    }

    .rrow + .rrow {
        margin-top: 16px;
    }

    .rlabel {
        position: absolute;
        left: 0;
        right: 0;
        top: 100px;
        height: 22px;
        display: grid;
        grid-template-columns: 1fr auto 1fr;
        align-items: center;
        font-size: 16px;
        color: #777;
    }

    .exp {
        justify-self: end;
        margin-right: 17px;
        color: #777;
    }

    .g-clip {
        width: 133px;
        padding-left: 23px;
    }

    .g-clip .cell + .cell {
        margin-left: 21px;
    }

    .c5 {
        margin-left: 5px;
    }

    .g-font {
        width: 555px;
        padding-left: 24px;
    }

    .fbox {
        height: 36px;
        box-sizing: border-box;
        display: flex;
        align-items: center;
        border: 1px solid #e4e4e4;
        border-radius: 4px;
        font-size: 16px;
    }

    .fname {
        width: 248px;
        padding: 0 5px 0 9px;
        gap: 13px;
    }

    .fsize {
        width: 95px;
        margin-left: 13px;
        padding: 0 5px 0 12px;
    }

    .a1 {
        margin-left: 15px;
    }

    .a2 {
        margin-left: 20px;
    }

    .a3 {
        margin-left: 20px;
    }

    .r2 {
        margin-left: -8px;
    }

    .fb {
        width: 42px;
        display: flex;
        justify-content: center;
        align-items: center;
        font-size: 24px;
        font-family: "Liberation Sans", sans-serif;
    }

    .it {
        font-style: italic;
        font-family: "Liberation Serif", serif;
    }

    .fb small {
        font-size: 11px;
        font-family: "Open Sans", sans-serif;
    }

    .sup small {
        align-self: flex-start;
    }

    .sub small {
        align-self: flex-end;
    }

    .dd {
        display: flex;
        align-items: center;
        gap: 5px;
        margin-left: 14px;
    }

    .d1 {
        margin-left: 8px;
    }

    .ab {
        margin-left: 20px;
    }

    .dA {
        margin-left: 13px;
    }

    .ab span {
        width: 28px;
        font-size: 22px;
    }

    .g-tools {
        width: 311px;
        padding-left: 18px;
    }

    .tbtn {
        width: 111px;
        height: 36px;
        box-sizing: border-box;
        padding: 0 7px 0 9px;
        display: flex;
        align-items: center;
        gap: 9px;
        border-radius: 3px;
    }

    .tbtn .caret {
        margin-left: 3px;
    }

    .hover {
        background: #f4f5f6;
    }

    .second {
        margin-left: 14px;
    }

    .g-styles {
        width: 709px;
    }

    .styles-body {
        display: flex;
        padding-left: 25px;
    }

    .gallery {
        width: 526px;
        height: 86px;
        flex: none;
        box-sizing: border-box;
        padding: 20px 0 0 16px;
        display: flex;
        gap: 12px;
        border: 1px solid #ececec;
        border-radius: 6px;
    }

    .abc {
        width: 48px;
        height: 47px;
        flex: none;
        box-sizing: border-box;
        display: flex;
        align-items: center;
        justify-content: center;
        border: 1px solid #bdbdbd;
        border-radius: 4px;
        font-family: "Liberation Sans", sans-serif;
        font-weight: 700;
        font-size: 16px;
        color: #666;
    }

    .spin {
        margin: -12px 0 0 15px;
        height: 68px;
        display: flex;
        flex-direction: column;
        justify-content: space-between;
    }

    .tri {
        display: block;
        width: 0;
        height: 0;
        border-left: 4px solid transparent;
        border-right: 4px solid transparent;
        border-top: 5px solid #8a8a8a;
    }

    .tri-up {
        border-top: 0;
        border-bottom: 5px solid #8a8a8a;
    }

    .tri-more {
        position: relative;
    }

    .tri-more::before {
        content: "";
        position: absolute;
        left: -4px;
        top: -8px;
        width: 8px;
        height: 2px;
        background: #8a8a8a;
    }

    .fillstack {
        margin: 0 0 0 27px;
        display: flex;
        flex-direction: column;
    }

    .fillstack span {
        height: 29.500px;
        display: flex;
        align-items: center;
        gap: 7px;
    }

    .g-arr {
        width: 419px;
    }

    .arr-grid {
        padding-left: 27px;
        display: grid;
        grid-template-columns: 139px 127px 100px;
        grid-auto-rows: 36px;
        row-gap: 16px;
    }

    .arr {
        display: flex;
        align-items: center;
        gap: 10px;
    }

    .arr .caret {
        margin-left: -3px;
    }

    .g-rep {
        width: 150px;
    }

    .rep {
        padding-top: 8px;
        display: flex;
        flex-direction: column;
        align-items: center;
    }

    .rep-t {
        margin-top: -1px;
        line-height: 24px;
    }

    .rep-b {
        width: 100%;
        display: grid;
        grid-template-columns: 1fr auto 1fr;
        align-items: center;
        line-height: 26px;
    }

    .rep-b .caret {
        margin-left: 20px;
    }

    /* body */
    .body {
        height: 1140px;
        flex: none;
        display: grid;
        grid-template-columns: 84px 325px 1740px 54px 357px;
    }

    .rail {
        box-sizing: border-box;
        border-right: 1px solid #ececec;
        display: flex;
        flex-direction: column;
        align-items: center;
        color: #444;
    }

    .rail-top {
        height: 61px;
        display: flex;
        align-items: center;
    }

    .rail-item {
        height: 90px;
        display: flex;
        flex-direction: column;
        align-items: center;
    }

    .rail-box {
        width: 48px;
        height: 48px;
        display: flex;
        align-items: center;
        justify-content: center;
        border-radius: 6px;
    }

    .rail-lbl {
        height: 20px;
        line-height: 20px;
        font-size: 14px;
        color: #333;
    }

    .rail-item.on .rail-box {
        background: #e9f3fc;
        color: #1a78d2;
    }

    .rail-item.on .rail-lbl {
        color: #2a7f9f;
    }

    .panel {
        position: relative;
        box-sizing: border-box;
        border-right: 1px solid #e6e6e6;
        display: flex;
        flex-direction: column;
        z-index: 2;
        font-size: 17px;
    }

    .p-head {
        margin: 19px 24px 0;
        height: 38px;
        display: flex;
        align-items: center;
        justify-content: space-between;
    }

    .p-head strong {
        font-size: 17px;
        color: #222;
    }

    .ai-sym {
        display: flex;
        align-items: center;
        gap: 4px;
        font-size: 17.500px;
        color: #1f7cc4;
    }

    .p-search {
        margin: 17px 24px 0;
        height: 46px;
        box-sizing: border-box;
        padding-left: 14px;
        display: flex;
        align-items: center;
        gap: 10px;
        border: 1px solid #e8e8e8;
        border-radius: 6px;
        color: #999;
    }

    .p-search span {
        color: #b5b5b5;
    }

    .p-actions {
        margin-top: 23px;
        height: 30px;
        padding: 0 24px 14px;
        display: flex;
        align-items: center;
        justify-content: space-between;
        border-bottom: 1px solid #e6e6e6;
        color: #444;
    }

    .pa {
        display: flex;
        align-items: center;
        gap: 4px;
    }

    .pa-m {
        gap: 8px;
    }

    .cat {
        height: 30px;
        padding-left: 24px;
        display: flex;
        align-items: center;
        color: #3a3a3a;
    }

    .arrow {
        width: 0;
        height: 0;
        margin: 0 10px 0 3px;
        border-top: 4px solid transparent;
        border-bottom: 4px solid transparent;
        border-left: 6px solid #777;
    }

    .arrow.open {
        margin: 0 8px 0 2px;
        border-left: 5px solid transparent;
        border-right: 5px solid transparent;
        border-top: 6px solid #777;
        border-bottom: 0;
    }

    .c-my {
        margin-top: 15px;
    }

    .c-doors {
        margin-top: 18px;
    }

    .c-wall {
        margin-top: 21px;
    }

    .c-kit {
        margin-top: 19px;
    }

    .thumbs {
        margin: 16px 0 0 24px;
        display: grid;
        grid-template-columns: repeat(4, 60px);
        grid-auto-rows: 60px;
        column-gap: 12px;
        row-gap: 11.800px;
    }

    .thumb {
        background: #f6f7fb;
        border-radius: 9px;
    }

    .thumb svg {
        display: block;
        overflow: visible;
    }

    .redbox {
        position: absolute;
        left: 5px;
        top: 251px;
        width: 323px;
        height: 544px;
        box-sizing: border-box;
        border: 5px solid #c9242f;
        pointer-events: none;
    }

    .p-foot {
        margin-top: auto;
        padding: 17px 24px 18px;
        border-top: 1px solid #e6e6e6;
    }

    button {
        display: block;
        border: 0;
        padding: 0;
        font-family: inherit;
    }

    .primary {
        background: #0a7ffb;
        color: #fff;
        border-radius: 6px;
        font-size: 17px;
    }

    .more-btn {
        width: 276px;
        height: 48px;
        padding-top: 2px;
        font-size: 17.500px;
    }

    .center {
        display: flex;
        flex-direction: column;
        min-width: 0;
    }

    .hruler {
        height: 27px;
        flex: none;
        display: flex;
    }

    .corner {
        width: 26px;
        flex: none;
    }

    .rsvg, .vruler {
        flex: none;
        display: block;
    }

    .rtext {
        font-size: 14px;
        fill: #888;
        font-family: "Open Sans", sans-serif;
    }

    .work {
        height: 1069px;
        flex: none;
        display: flex;
    }

    .canvas {
        position: relative;
        width: 1696px;
        flex: none;
        background: #ebecf2;
        overflow: hidden;
    }

    .page {
        position: absolute;
        left: 548px;
        top: 266px;
    }

    .pill {
        position: absolute;
        left: 1538px;
        top: 989px;
        width: 133px;
        height: 56px;
        display: flex;
        align-items: center;
        justify-content: center;
        gap: 15px;
        background: #fff;
        border-radius: 28px;
        box-shadow: 0 4px 14px rgba(60, 60, 90, .14);
    }

    .pill-sep {
        width: 1px;
        height: 36px;
        background: #eee;
    }

    .vscroll {
        width: 18px;
        flex: none;
        display: flex;
        justify-content: center;
    }

    .vthumb {
        margin-top: 98px;
        width: 14px;
        height: 828px;
        border-radius: 7px;
        background: #d0d1d3;
    }

    .hscroll {
        height: 20px;
        flex: none;
        padding-left: 276px;
    }

    .hthumb {
        display: block;
        margin-top: 2px;
        width: 1152px;
        height: 15px;
        border-radius: 8px;
        background: #d0d1d3;
    }

    .colors {
        height: 24px;
        flex: none;
        display: flex;
        padding-right: 18px;
    }

    .c-fill {
        width: 52px;
        box-sizing: border-box;
        padding-left: 14px;
        display: flex;
        align-items: center;
        gap: 3px;
        color: #444;
    }

    .swatches {
        flex: 1;
        display: flex;
        gap: 2px;
    }

    .sw {
        flex: 1;
        border-radius: 2px;
    }

    .rrail {
        box-sizing: border-box;
        border-left: 1px solid #e6e6e6;
        border-right: 1px solid #e6e6e6;
        display: flex;
        flex-direction: column;
        color: #444;
    }

    .rr-i {
        height: 52px;
        display: flex;
        align-items: center;
        justify-content: center;
    }

    .rr-chev {
        height: 50px;
    }

    .rr-on {
        margin: 14px 0 15px;
        background: #0a7ffb;
    }

    .rr-gear {
        margin-top: auto;
        height: 48px;
    }

    .props {
        display: flex;
        flex-direction: column;
    }

    .props-t {
        height: 49px;
        box-sizing: border-box;
        padding: 4px 0 0 31px;
        display: flex;
        align-items: center;
        border-bottom: 1px solid #ececec;
        font-size: 18px;
        font-weight: 500;
        color: #222;
    }

    .manage {
        margin: 18px 0 0 66px;
        width: 225px;
        height: 45px;
        padding-top: 2px;
        border-radius: 5px;
        background: #ebedf0;
        color: #9a9a9a;
        font-size: 17px;
    }

    .export {
        margin: auto 0 22px 30px;
        width: 298px;
        height: 41px;
        padding: 2px 18px 0 0;
    }

    /* status bar */
    .status {
        height: 46px;
        flex: none;
        display: flex;
        align-items: center;
        background: #f1f3f9;
        color: #444;
        font-size: 17px;
    }

    .st {
        height: 36px;
        box-sizing: border-box;
        display: flex;
        align-items: center;
        border-right: 1px solid #e1e3e8;
    }

    .st-view {
        width: 73px;
        padding-left: 28px;
    }

    .st-page {
        width: 193px;
        padding: 2px 14px 0 25px;
        justify-content: space-between;
    }

    .st-add {
        width: 60px;
        justify-content: center;
    }

    .st-cur {
        margin-left: 25px;
        padding-top: 2px;
        font-size: 18px;
        color: #1a78c2;
        font-weight: 700;
    }

    .st-right {
        margin-left: auto;
        display: flex;
        align-items: center;
        padding-right: 30px;
    }

    .st-num {
        padding: 2px 13px 0;
        border-left: 1px solid #e1e3e8;
    }

    .st-lay {
        padding: 0 0 0 18px;
        gap: 5px;
        border-right: 0;
    }

    .st-focus {
        margin-left: 23px;
        display: flex;
        align-items: center;
        gap: 12px;
    }

    .st-play {
        margin-left: 15px;
        padding-right: 18px;
    }

    .st-zm {
        margin-left: 14px;
    }

    .slider {
        position: relative;
        margin-left: 17px;
        width: 144px;
        height: 5px;
        border-radius: 3px;
        background: #fff;
    }

    .slider::before {
        content: "";
        position: absolute;
        left: 0;
        top: 0;
        width: 20px;
        height: 5px;
        border-radius: 3px;
        background: #444;
    }

    .knob {
        position: absolute;
        left: 17px;
        top: -6px;
        width: 14px;
        height: 14px;
        box-sizing: border-box;
        border: 3px solid #444;
        border-radius: 50%;
        background: #fff;
    }

    .st-zp {
        margin-left: 17px;
    }

    .st-pct {
        margin-left: 24px;
        padding: 2px 18px 0 0;
        gap: 11px;
    }

    .st-fit {
        margin-left: 19px;
    }

    .st-w {
        margin-left: 25px;
    }

    .taskline {
        height: 3px;
        flex: none;
        background: linear-gradient(90deg, #3b3b3b 72px, #aaaaaa 72px 504px, #3b3b3b 504px 1031px, #777 1031px 1104px, #3b3b3b 1104px);
    }
</style>
